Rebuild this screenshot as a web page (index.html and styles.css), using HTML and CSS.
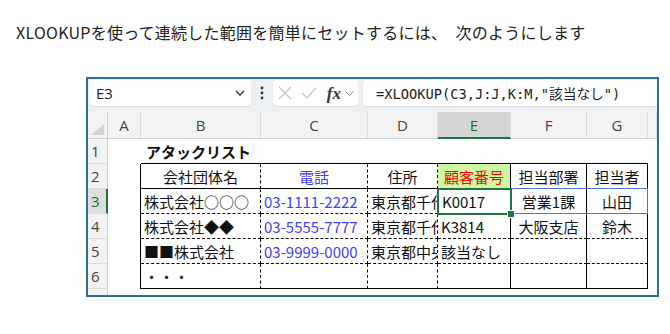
FILE: index.html
```html
<!DOCTYPE html>
<html lang="ja">
  <head>
    <meta charset="UTF-8" />
    <meta name="viewport" content="width=device-width, initial-scale=1.0" />
    <title>XLOOKUP 連続した範囲</title>
    <link rel="stylesheet" href="styles.css">
  </head>
  <body>
    <p class="lead">XLOOKUPを使って連続した範囲を簡単にセットするには、　次のようにします</p>

    <div class="window">
      <div class="formula-bar">
        <div class="name-box">
          <span>E3</span>
          <svg width="10" height="6" viewBox="0 0 10 6"><polyline points="1,1 5,5 9,1" fill="none" stroke="#333" stroke-width="1.3" /></svg>
        </div>
        <div class="more">
          <svg width="4" height="14" viewBox="0 0 4 14"><circle cx="2" cy="2" r="1.4" fill="#333" /><circle cx="2" cy="7" r="1.4" fill="#333" /><circle cx="2" cy="12" r="1.4" fill="#333" /></svg>
        </div>
        <div class="func-box">
          <svg width="14" height="14" viewBox="0 0 14 14"><path d="M1 1L13 13M13 1L1 13" stroke="#c2c2c2" stroke-width="1.2" fill="none" /></svg>
          <svg width="16" height="12" viewBox="0 0 16 12"><polyline points="1,6 6,11 15,1" stroke="#c2c2c2" stroke-width="1.2" fill="none" /></svg>
          <i class="fx">fx</i>
          <svg width="9" height="5" viewBox="0 0 9 5"><polyline points="0.5,0.5 4.5,4.5 8.5,0.5" fill="none" stroke="#888" stroke-width="1" /></svg>
        </div>
        <div class="formula">=XLOOKUP(C3,J:J,K:M,"該当なし")</div>
      </div>

      <div class="sheet">
        <!-- column headers -->
        <div class="corner"></div>
        <div class="col-head">A</div>
        <div class="col-head">B</div>
        <div class="col-head">C</div>
        <div class="col-head">D</div>
        <div class="col-head current">E</div>
        <div class="col-head">F</div>
        <div class="col-head">G</div>
        <div class="col-head"></div>

        <!-- row 1 -->
        <div class="row-head">1</div>
        <div class="cell"></div>
        <div class="cell line-b title">アタックリスト</div>
        <div class="cell line-b"></div>
        <div class="cell line-b"></div>
        <div class="cell line-b"></div>
        <div class="cell line-b"></div>
        <div class="cell line-b"></div>
        <div class="cell"></div>

        <!-- row 2 -->
        <div class="row-head">2</div>
        <div class="cell line-r"></div>
        <div class="cell line-b dash-r center">会社団体名</div>
        <div class="cell line-b dash-r center blue">電話</div>
        <div class="cell line-b dash-r center">住所</div>
        <div class="cell line-b line-r center key">顧客番号</div>
        <div class="cell line-b line-r center">担当部署</div>
        <div class="cell line-b line-r center">担当者</div>
        <div class="cell"></div>

        <!-- row 3 -->
        <div class="row-head current">3</div>
        <div class="cell line-r"></div>
        <div class="cell dash-b dash-r">株式会社○○○</div>
        <div class="cell dash-b dash-r blue">03-1111-2222</div>
        <div class="cell dash-b dash-r">東京都千代田区</div>
        <div class="cell dash-b line-r selected">
          K0017
          <span class="spill"></span>
          <span class="cursor"></span>
        </div>
        <div class="cell dash-b line-r center">営業1課</div>
        <div class="cell dash-b line-r center">山田</div>
        <div class="cell"></div>

        <!-- row 4 -->
        <div class="row-head">4</div>
        <div class="cell line-r"></div>
        <div class="cell dash-b dash-r">株式会社◆◆</div>
        <div class="cell dash-b dash-r blue">03-5555-7777</div>
        <div class="cell dash-b dash-r">東京都千代田区</div>
        <div class="cell dash-b line-r">K3814</div>
        <div class="cell dash-b line-r center">大阪支店</div>
        <div class="cell dash-b line-r center">鈴木</div>
        <div class="cell"></div>

        <!-- row 5 -->
        <div class="row-head">5</div>
        <div class="cell line-r"></div>
        <div class="cell dash-b dash-r">■■株式会社</div>
        <div class="cell dash-b dash-r blue">03-9999-0000</div>
        <div class="cell dash-b dash-r">東京都中央区</div>
        <div class="cell dash-b line-r">該当なし</div>
        <div class="cell dash-b line-r"></div>
        <div class="cell dash-b line-r"></div>
        <div class="cell"></div>

        <!-- row 6 -->
        <div class="row-head">6</div>
        <div class="cell line-r"></div>
        <div class="cell line-b dash-r">・・・</div>
        <div class="cell line-b dash-r"></div>
        <div class="cell line-b dash-r"></div>
        <div class="cell line-b line-r"></div>
        <div class="cell line-b line-r"></div>
        <div class="cell line-b line-r"></div>
        <div class="cell"></div>

        <!-- row 7 (cut off) -->
        <div class="row-head">7</div>
        <div class="cell"></div>
        <div class="cell"></div>
        <div class="cell"></div>
        <div class="cell"></div>
        <div class="cell"></div>
        <div class="cell"></div>
        <div class="cell"></div>
        <div class="cell"></div>
      </div>
    </div>
  </body>
</html>
```

FILE: styles.css
```css
body {
  margin: 0;
  font-family: "Noto Sans CJK JP", "Noto Sans", sans-serif;
  color: #222;
  background: #fff;
}
.lead {
  margin: 0;
  padding: 20px 0 0 16px;
  font-size: 16px;
  line-height: 24px;
  letter-spacing: 0.25px;
}
.window {
  margin: 33px 0 0 86px;
  width: 573px;
  height: 220px;
  border: 2px solid #2e6e9d;
  box-sizing: border-box;
  background: #edf0f3;
  overflow: hidden;
}

/* formula bar */
.formula-bar {
  display: flex;
  height: 33px;
  padding: 1px 0 0 1px;
  box-sizing: border-box;
}
.name-box,
.func-box,
.formula {
  height: 26px;
  background: #fff;
  border-radius: 4px;
  box-shadow: 0 1px 1px rgba(0, 0, 0, 0.08);
  display: flex;
  align-items: center;
  box-sizing: border-box;
}
.name-box {
  width: 162px;
  padding: 0 6px 0 7px;
  justify-content: space-between;
  font-family: "Open Sans", "Noto Sans", sans-serif;
  font-size: 15px;
  color: #222;
}
.more {
  width: 22px;
  display: flex;
  align-items: center;
  justify-content: center;
  height: 26px;
}
.func-box {
  width: 85px;
  padding: 0 4px 0 5px;
  gap: 8px;
}
.func-box svg:nth-child(2) {
  margin-left: 1px;
}
.fx {
  font-family: "Liberation Serif", "DejaVu Serif", serif;
  font-size: 17px;
  font-weight: bold;
  color: #333;
  margin-left: 2px;
  margin-right: -4px;
  line-height: 1;
}
.formula {
  flex: 1;
  margin-left: 5px;
  padding-left: 13px;
  border-radius: 4px 0 0 4px;
  font-family: "DejaVu Sans Mono", "Noto Sans CJK JP", monospace;
  font-size: 13.7px;
  color: #222;
  white-space: nowrap;
}

/* sheet grid */
.sheet {
  display: grid;
  grid-template-columns: 20px 33px 120px 107px 70px 73px 76px 61px 1fr;
  grid-template-rows: 27px repeat(7, 25px);
  height: 183px;
  overflow: hidden;
  background: #fff;
}
.corner {
  background: #f3f3f3;
  border-right: 1px solid #cfcfcf;
  border-bottom: 1px solid #cfcfcf;
  position: relative;
}
.corner::after {
  content: "";
  position: absolute;
  right: 3px;
  bottom: 3px;
  border-left: 13px solid transparent;
  border-bottom: 11px solid #d4d4d4;
}
.col-head {
  background: #f3f3f3;
  border-right: 1px solid #dcdcdc;
  border-bottom: 1px solid #cfcfcf;
  display: flex;
  align-items: center;
  justify-content: center;
  font-family: "Open Sans", "Noto Sans", sans-serif;
  font-size: 15px;
  color: #444;
}
.row-head {
  background: #f3f3f3;
  border-right: 1px solid #cfcfcf;
  border-bottom: 1px solid #dcdcdc;
  padding-left: 3px;
  display: flex;
  align-items: center;
  font-family: "Open Sans", "Noto Sans", sans-serif;
  font-size: 15px;
  color: #444;
}
.col-head.current {
  background: #d6d6d6;
  border-bottom: 2px solid #217346;
  color: #1d6a3f;
}
.row-head.current {
  background: #dedede;
  border-right: 2px solid #217346;
  color: #1d6a3f;
}
.cell {
  box-sizing: border-box;
  padding-left: 3px;
  display: flex;
  align-items: center;
  font-size: 15px;
  color: #111;
  white-space: nowrap;
  overflow: hidden;
}
.center {
  justify-content: center;
  padding-left: 0;
}
.title {
  font-weight: bold;
  padding-left: 5px;
}
.blue {
  color: #3f3ff5;
}
.key {
  background: #cdf7a3;
  color: #ff0000;
}
.line-b {
  border-bottom: 1px solid #000;
}
.dash-b {
  border-bottom: 1px dashed #000;
}
.line-r {
  border-right: 1px solid #000;
}
.dash-r {
  border-right: 1px dashed #000;
}

/* active cell and spill range */
.selected {
  position: relative;
  overflow: visible;
  padding-left: 4px;
}
.spill {
  position: absolute;
  left: 0;
  top: -1px;
  width: 210px;
  height: 26px;
  border: 1px solid #4a78d0;
  box-sizing: border-box;
}
.cursor {
  position: absolute;
  left: -1px;
  top: -1px;
  width: 75px;
  height: 27px;
  border: 2px solid #217346;
  box-sizing: border-box;
}
.cursor::after {
  content: "";
  position: absolute;
  right: -5px;
  bottom: -5px;
  width: 6px;
  height: 6px;
  background: #217346;
  border: 1px solid #fff;
}
```
